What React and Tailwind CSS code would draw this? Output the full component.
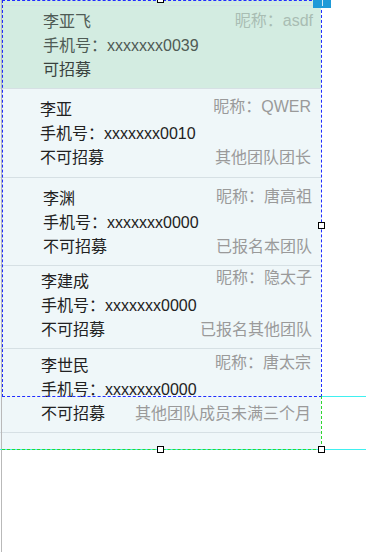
import React from 'react';

const font = { fontFamily: '"Liberation Sans", "Noto Sans CJK SC", sans-serif' };

const rows = [
  {
    name: '李亚飞', phone: 'xxxxxxx0039', nick: 'asdf', status: '可招募', note: '',
    box: 'h-[84px] bg-[#d3ece1] border-t border-[#c4e0d2] pt-[4px] pl-[43px] pr-[8px]',
    nickCls: '-mt-px text-[#a9bdb3]', text: 'text-[#4f5b55]', statusText: 'text-[#3a423e]',
  },
  {
    name: '李亚', phone: 'xxxxxxx0010', nick: 'QWER', status: '不可招募', note: '其他团队团长',
    box: 'h-[89px] pt-[9px] pl-[40px] pr-[10px]',
    nickCls: '-mt-[3px] text-[#9a9a9a]', text: 'text-[#222]', statusText: 'text-[#222]',
  },
  {
    name: '李渊', phone: 'xxxxxxx0000', nick: '唐高祖', status: '不可招募', note: '已报名本团队',
    box: 'h-[88px] pt-[9px] pl-[43px] pr-[9px]',
    nickCls: '-mt-0.5 text-[#9a9a9a]', text: 'text-[#222]', statusText: 'text-[#222]',
  },
  {
    name: '李建成', phone: 'xxxxxxx0000', nick: '隐太子', status: '不可招募', note: '已报名其他团队',
    box: 'h-[83px] pt-[4px] pl-[41px] pr-[9px]',
    nickCls: '-mt-1 text-[#9a9a9a]', text: 'text-[#222]', statusText: 'text-[#222]',
  },
  {
    name: '李世民', phone: 'xxxxxxx0000', nick: '唐太宗', status: '不可招募', note: '其他团队成员未满三个月',
    box: 'h-[84px] pt-[5px] pl-[41px] pr-[10px]',
    nickCls: '-mt-[3px] text-[#9a9a9a]', text: 'text-[#222]', statusText: 'text-[#222]',
  },
];

function Row({ r }) {
  return (
    <div className={`flex flex-col border-b border-[#d6e0e4] text-[16px] leading-[24px] whitespace-nowrap ${r.box}`}>
      <div className="flex justify-between items-start">
        <span className={r.text}>{r.name}</span>
        <span className={r.nickCls}>昵称：{r.nick}</span>
      </div>
      <div className={r.text}>手机号：{r.phone}</div>
      <div className="flex justify-between">
        <span className={r.statusText}>{r.status}</span>
        <span className="text-[#9a9a9a]">{r.note}</span>
      </div>
    </div>
  );
}

export default function App() {
  return (
    <div className="relative w-[366px] h-[552px] bg-white overflow-hidden" style={font}>
      <div className="w-[321px] bg-[#eff7f9]">
        <div className="h-[5px] bg-[#d3ece1]" />
        {rows.map((r, i) => (
          <Row key={i} r={r} />
        ))}
        <div className="h-[16px]" />
      </div>

      {/* editor overlays */}
      <div className="absolute left-px top-0 bottom-0 w-px bg-[#b9b9b9]" />
      <div className="absolute left-[2px] top-0 w-[320px] h-[397px] border border-dashed border-[#1f2bff]" />
      <div className="absolute left-[321px] top-[396px] w-px h-[53px] border-l border-dashed border-[#2ed62e]" />
      <div className="absolute left-[322px] top-[396px] right-0 h-px bg-[#3ff0f0]" />
      <div className="absolute left-0 top-[449px] right-0 h-px bg-[#3ff0f0]" />
      <div className="absolute left-[2px] top-[449px] w-[319px] h-px border-t border-dashed border-[#2ed62e]" />
      <div className="absolute left-[313px] top-0 w-[18px] h-[8px] bg-[#1e9ad8] flex justify-center">
        <div className="w-px h-[6px] bg-white/80" />
      </div>
      <div className="absolute left-[157px] -top-[3px] w-[7px] h-[6px] bg-white border border-black" />
      <div className="absolute left-[318px] top-[222px] w-[7px] h-[7px] bg-white border border-black" />
      <div className="absolute left-[157px] top-[446px] w-[7px] h-[7px] bg-white border border-black" />
      <div className="absolute left-[318px] top-[446px] w-[7px] h-[7px] bg-white border border-black" />
    </div>
  );
}
